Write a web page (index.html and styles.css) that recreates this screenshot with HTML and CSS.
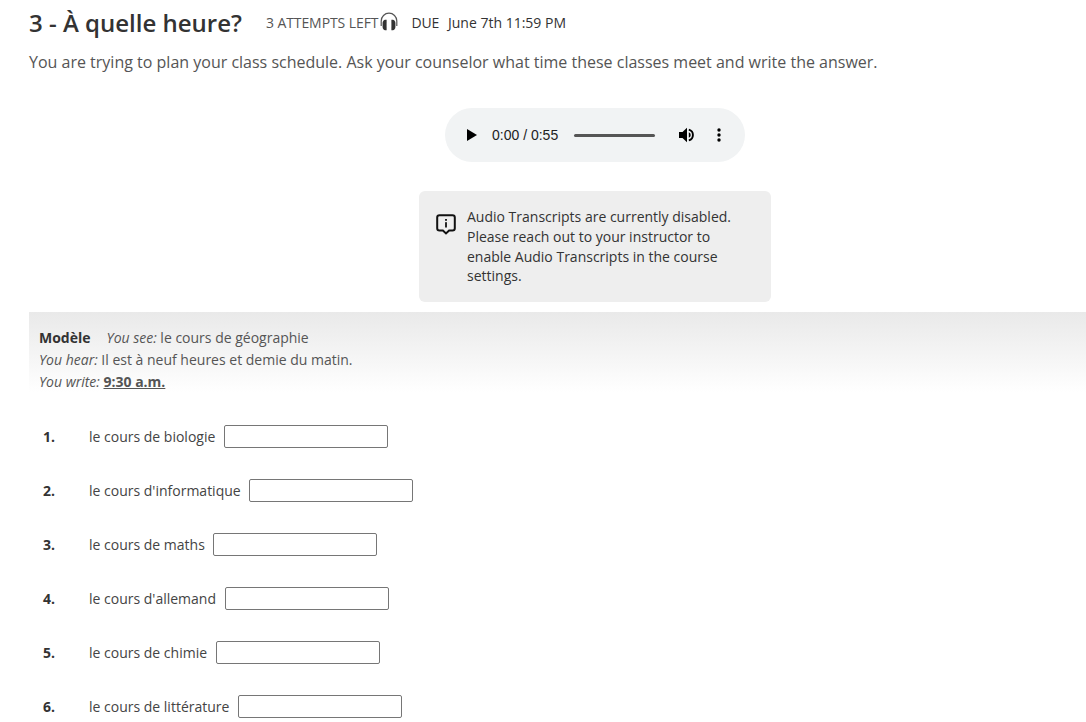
FILE: index.html
```html
<!DOCTYPE html>
<html lang="en">
<head>
<meta charset="utf-8">
<title>3 - À quelle heure?</title>
<link rel="stylesheet" href="styles.css">
</head>
<body>
<main class="page">
  <header class="head">
    <h1 class="title">3 - À quelle heure?</h1>
    <span class="attempts">3 ATTEMPTS LEFT</span>
    <svg class="headphones" viewBox="0 0 18 19" width="18" height="19"><path d="M1.200 14V9a7.800 7.800 0 0 1 15.600 0v5" fill="none" stroke="#555" stroke-width="1.200"/><path d="M2.600 11c0-1.800 1.200-3.200 2.500-3.200h1.500v10.400H5.100c-1.300 0-2.500-1.400-2.500-3.200z" fill="#333"/><path d="M15.400 11c0-1.800-1.200-3.200-2.500-3.200h-1.500v10.400h1.500c1.300 0 2.500-1.400 2.500-3.200z" fill="#333"/></svg>
    <span class="due">DUE</span>
    <span class="date">June 7th 11:59 PM</span>
  </header>
  <p class="intro">You are trying to plan your class schedule. Ask your counselor what time these classes meet and write the answer.</p>

  <div class="player">
    <svg class="play" viewBox="0 0 10 12" width="10" height="12"><path d="M0 0l10 6-10 6z"/></svg>
    <span class="time">0:00 / 0:55</span>
    <span class="track"></span>
    <svg class="vol" viewBox="0 0 16 16" width="16" height="16"><path d="M0 5h3.500L8 .8v14.400L3.500 11H0z"/><path d="M9.800 2.600a5.600 5.600 0 0 1 0 10.800" fill="none" stroke="#000" stroke-width="1.900"/><path d="M9.800 5.200a3 3 0 0 1 0 5.600z"/></svg>
    <svg class="more" viewBox="0 0 4 14" width="4" height="14"><circle cx="2" cy="2" r="1.700"/><circle cx="2" cy="7" r="1.700"/><circle cx="2" cy="12" r="1.700"/></svg>
  </div>

  <aside class="notice">
    <svg class="notice-icon" viewBox="0 0 20 21" width="20" height="21"><path d="M3.500 1.200h13a2.300 2.300 0 0 1 2.300 2.300v10.800a2.300 2.300 0 0 1-2.300 2.300h-3.400L10 19.500l-3.100-2.900H3.500a2.300 2.300 0 0 1-2.300-2.300V3.500a2.300 2.300 0 0 1 2.300-2.300z" fill="none" stroke="#111" stroke-width="2"/><rect x="9.100" y="5" width="1.800" height="1.800" fill="#111"/><rect x="9.100" y="8.200" width="1.800" height="5.300" fill="#111"/></svg>
    <p class="notice-text">Audio Transcripts are currently disabled. Please reach out to your instructor to enable Audio Transcripts in the course settings.</p>
  </aside>

  <section class="model">
    <div><b class="model-label">Modèle</b><i class="see">You see:</i> le cours de géographie</div>
    <div><i>You hear:</i> Il est à neuf heures et demie du matin.</div>
    <div><i>You write:</i> <b class="answer">9:30 a.m.</b></div>
  </section>

  <ol class="items">
    <li class="item"><b class="num">1.</b><span>le cours de biologie</span><input class="field" type="text"></li>
    <li class="item"><b class="num">2.</b><span>le cours d'informatique</span><input class="field" type="text"></li>
    <li class="item"><b class="num">3.</b><span>le cours de maths</span><input class="field" type="text"></li>
    <li class="item"><b class="num">4.</b><span>le cours d'allemand</span><input class="field" type="text"></li>
    <li class="item"><b class="num">5.</b><span>le cours de chimie</span><input class="field" type="text"></li>
    <li class="item"><b class="num">6.</b><span>le cours de littérature</span><input class="field" type="text"></li>
  </ol>
</main>
</body>
</html>
```
FILE: styles.css
```css
html, body { margin: 0; padding: 0; background: #fff; overflow: hidden; }
body { height: 722px; font-family: "Open Sans", sans-serif; color: #333; }
.page { padding-left: 29px; }
.head { display: flex; align-items: center; height: 46px; }
.title { margin: 0 24px 0 0; font-size: 24px; line-height: 46px; font-weight: 600; color: #333; }
.attempts { margin-bottom: 2px; font-size: 14px; color: #555; letter-spacing: -0.08px; }
.headphones { flex: none; margin: 0 0 4px 2px; }
.due { margin: 0 0 2px 13px; font-size: 14px; color: #333; letter-spacing: -0.2px; }
.date { margin: 0 0 2px 9px; font-size: 14px; color: #333; letter-spacing: 0; }
.intro { margin: 2px 0 0; font-size: 16px; line-height: 28px; color: #555; }
.player { display: flex; align-items: center; box-sizing: border-box; width: 300px; height: 54px; margin: 32px 0 0 416px; padding-left: 22px; border-radius: 27px; background: #f1f3f4; }
.time { margin-left: 15px; font: 14px "Liberation Sans", Arial, sans-serif; color: #222; }
.track { width: 81px; height: 3px; margin-left: 16px; border-radius: 2px; background: #555; }
.vol { margin-left: 24px; }
.more { margin-left: 22px; }
.notice { display: flex; box-sizing: border-box; width: 352px; height: 111px; margin: 29px 0 0 390px; padding: 16px 18px 16px 17px; border-radius: 6px; background: #eee; }
.notice-icon { flex: none; margin: 7px 11px 0 0; }
.notice-text { margin: 0; font-size: 14px; line-height: 19.8px; color: #333; }
.model { height: 80px; margin-top: 10px; padding: 15px 10px 0; font-size: 14px; line-height: 22px; color: #555; background: linear-gradient(#e9e9e9, #fff 85%); }
.model-label { margin-right: 16px; color: #333; font-weight: 700; }
.answer { text-decoration: underline; }
.items { margin: 17px 0 0; padding: 0; list-style: none; }
.item { display: flex; align-items: center; height: 24px; margin-bottom: 30px; font-size: 14px; color: #444; }
.num { width: 46px; margin-left: 14px; color: #333; }
.field { box-sizing: border-box; width: 164px; height: 23px; margin: 0 0 0 8.55px; padding: 0; border: 1px solid #767676; border-radius: 2px; background: #fff; }
```
